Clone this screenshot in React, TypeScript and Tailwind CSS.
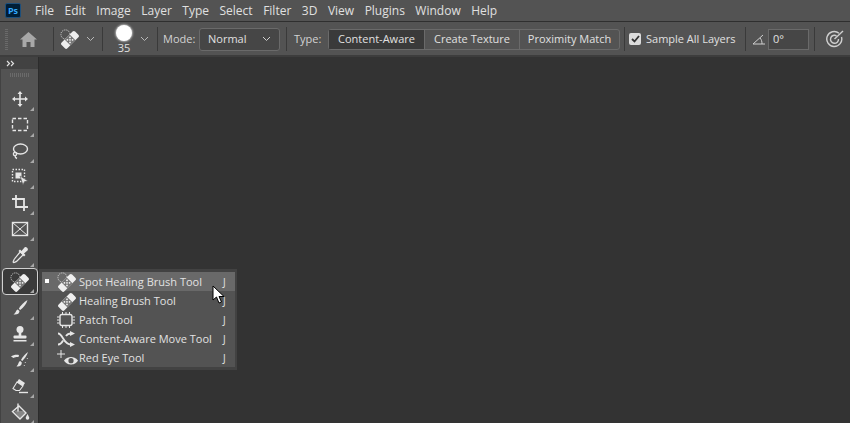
import type { ReactNode } from "react"

const font = "font-['Open_Sans',sans-serif]"

function Bandage({ spot = false, size = 22 }: { spot?: boolean; size?: number }) {
  return (
    <svg width={size} height={size} viewBox="0 0 22 22" fill="none">
      {spot && <circle cx="6" cy="6" r="5" stroke="#e8e8e8" strokeWidth="1" strokeDasharray="1.2 1.2" />}
      <g transform="rotate(-45 11 12)">
        <rect x="0.5" y="7.500" width="21" height="9" rx="2" fill="#efefef" />
        <rect x="7" y="7.500" width="8" height="9" fill="#757575" />
        <circle cx="9" cy="10" r="1" fill="#efefef" />
        <circle cx="13" cy="10" r="1" fill="#efefef" />
        <circle cx="9" cy="14" r="1" fill="#efefef" />
        <circle cx="13" cy="14" r="1" fill="#efefef" />
        <circle cx="11" cy="12" r="1" fill="#efefef" />
      </g>
    </svg>
  )
}

function Corner() {
  return <span className="absolute right-[3px] bottom-[1px] w-0 h-0 border-l-[4px] border-l-transparent border-b-[4px] border-b-[#a8a8a8]" />
}

function Tool({ children, active }: { children: ReactNode; active?: boolean }) {
  return (
    <div className={"relative flex items-center justify-center shrink-0 " + (active ? "border border-[#d0d0d0] rounded-[4px] bg-[#3a3a3a] h-[27px] w-[36px]" : "w-[34px] h-[26px]")}>
      {children}
      <Corner />
    </div>
  )
}

function Chevron({ color = "#b8b8b8" }: { color?: string }) {
  return (
    <svg width="9" height="6" viewBox="0 0 9 6" fill="none" stroke={color}>
      <path d="M1 1l3.500 3.500L8 1" />
    </svg>
  )
}

function Sep() {
  return <div className="w-px h-[24px] shrink-0 bg-[#3a3a3a]" />
}

const s = { fill: "none", stroke: "#e6e6e6", strokeWidth: 1.4 }

const tools = [
  <svg key="m" width="18" height="18" viewBox="0 0 18 18" fill="#e6e6e6"><path d="M9 1l2.500 3H9.800v4.200H14V6.500L17 9l-3 2.500V9.800H9.800V14h1.700L9 17l-2.500-3h1.700V9.800H4v1.700L1 9l3-2.500v1.700h4.200V4H6.500z" /></svg>,
  <svg key="r" width="18" height="16" viewBox="0 0 18 16"><rect x="1.5" y="1.5" width="15" height="12" {...s} strokeDasharray="3.5 2" /></svg>,
  <svg key="l" width="18" height="18" viewBox="0 0 18 18"><ellipse cx="9.5" cy="7" rx="7" ry="5" {...s} /><circle cx="4" cy="12" r="1.6" {...s} /><path d="M4 13.500c0 1.500 1 2.500 2 3" {...s} /></svg>,
  <svg key="o" width="18" height="18" viewBox="0 0 18 18"><rect x="1.5" y="1.5" width="12" height="12" {...s} strokeDasharray="1.5 1.5" /><rect x="4.5" y="4.5" width="6" height="6" fill="#e6e6e6" /><path d="M9 8l8 5-3.500.6L12 17z" fill="#e6e6e6" stroke="#535353" strokeWidth="0.6" /></svg>,
  <svg key="c" width="18" height="18" viewBox="0 0 18 18"><path d="M5 1v12h12M1 5h12v12" {...s} strokeWidth="1.8" /></svg>,
  <svg key="f" width="18" height="16" viewBox="0 0 18 16"><rect x="1.5" y="1.5" width="15" height="13" {...s} /><path d="M1.500 1.500l15 13M16.500 1.500l-15 13" {...s} strokeWidth="1" /></svg>,
  <svg key="e" width="18" height="18" viewBox="0 0 18 18"><path d="M9.500 5.500l3 3-6.500 6.500c-1 1-2 1-3 1.500-.5.300-1-.2-.8-.8.500-1 .5-2 1.500-3z" {...s} strokeWidth="1.2" /><path d="M9 3.500l1.500 1.500L13.500 1.500c1.500-1.500 4.500 1.500 3 3L13 7.500l1.500 1.500-1.500 1.500-5.500-5.500z" fill="#e6e6e6" /></svg>,
]

const tools2 = [
  <svg key="b" width="18" height="18" viewBox="0 0 18 18"><path d="M16.500 1C13 3 9.500 6.500 7.800 9.800l1.400 1.200C12.500 8.500 15.500 5 16.500 1z" fill="#e6e6e6" /><path d="M6.800 10.500c-2 .5-1.500 3-4.300 5 3.500.5 6-.8 6-3.500z" fill="#e6e6e6" /></svg>,
  <svg key="s" width="18" height="18" viewBox="0 0 18 18" fill="#e6e6e6"><circle cx="9" cy="4.500" r="3.500" /><rect x="7.700" y="7" width="2.600" height="4" /><rect x="2.500" y="10.500" width="13" height="3" rx="1" /><rect x="2.500" y="15" width="13" height="1.500" /></svg>,
  <svg key="h" width="20" height="18" viewBox="0 0 20 18"><path d="M18 1C15 3 12.500 6 11 9l1.300 1C14.500 7.500 17 4.500 18 1z" fill="#e6e6e6" /><path d="M10.200 10c-1.800.5-1.300 3-3.700 5.500 3 .5 5.500-1 5.300-4z" fill="#e6e6e6" /><path d="M9 4c-3-.5-6 0-8 1.500L3.500 7C5 6 7 5.800 8.500 6z" fill="#e6e6e6" /><path d="M15 11l.5.8M17 7l.5.8M14 14l.5.8" stroke="#e6e6e6" /></svg>,
  <svg key="er" width="20" height="18" viewBox="0 0 20 18"><path d="M9 2l6 4-2 3-6-4z" fill="#e6e6e6" /><path d="M7 5l6 4-3.500 4.500H6L3 11.500z" {...s} strokeWidth="1.1" /><path d="M9 15.500h9" {...s} /></svg>,
  <svg key="bk" width="20" height="20" viewBox="0 0 20 20"><path d="M9 4l7 7-6 6-7.500-7.500z" {...s} /><path d="M8 1.500v8" {...s} /><path d="M4 8.500l9 .5 3 2-6 6z" fill="#e6e6e6" fillOpacity="0.35" /><path d="M17.500 12c1 2 1.800 3 1.800 4a1.800 1.800 0 01-3.600 0c0-1 .8-2 1.800-4z" fill="#e6e6e6" /></svg>,
]

const menuItems = [
  { label: "Spot Healing Brush Tool", icon: <Bandage spot size={20} />, selected: true },
  { label: "Healing Brush Tool", icon: <Bandage size={20} /> },
  {
    label: "Patch Tool",
    icon: (
      <svg width="18" height="16" viewBox="0 0 18 16">
        <rect x="3" y="2.5" width="12" height="11" rx="2" {...s} />
        <path d="M5.500 0v2M9 0v2M12.500 0v2M5.500 14v2M9 14v2M12.500 14v2M0 5h2.500M0 8h2.500M0 11h2.500M15.500 5H18M15.500 8H18M15.500 11H18" stroke="#e6e6e6" />
      </svg>
    ),
  },
  {
    label: "Content-Aware Move Tool",
    icon: (
      <svg width="18" height="16" viewBox="0 0 18 16">
        <path d="M1 2.500c5 0 5 11 13 11M1 13.500c3 0 4-2 5-4M9 5c1-1.500 2.500-2.500 5-2.500" fill="none" stroke="#e6e6e6" strokeWidth="1.8" />
        <path d="M13 0l5 2.500L13 5zM13 11l5 2.500L13 16z" fill="#e6e6e6" />
      </svg>
    ),
  },
  {
    label: "Red Eye Tool",
    icon: (
      <svg width="22" height="18" viewBox="0 0 22 18">
        <path d="M4 1v8M0 5h8" stroke="#e6e6e6" />
        <path d="M7 11.500C9 8.500 12 8 14 8s5 .5 7 3.500C19 15 16 15.500 14 15.500S9 15 7 11.500z" fill="#e6e6e6" />
        <circle cx="14" cy="11.700" r="2.600" fill="#535353" />
      </svg>
    ),
  },
]

export default function App() {
  return (
    <div className={"relative w-[850px] h-[423px] overflow-hidden bg-[#333333] text-[#e0e0e0] flex flex-col " + font}>
      {/* menu bar */}
      <div className="h-[21px] shrink-0 bg-[#535353] flex items-center text-[12px] pl-[5px]">
        <div className="w-[16px] h-[15px] rounded-[2px] bg-[#001e36] border border-[#1c4f7c] text-[#31a8ff] text-[9px] font-bold flex items-center justify-center leading-none mr-[14px]">Ps</div>
        <div className="flex gap-[10.5px]">
          {["File", "Edit", "Image", "Layer", "Type", "Select", "Filter", "3D", "View", "Plugins", "Window", "Help"].map((m) => (
            <span key={m}>{m}</span>
          ))}
        </div>
      </div>
      <div className="h-px shrink-0 bg-[#2f2f2f]" />

      {/* options bar */}
      <div className="h-[35px] shrink-0 pt-px bg-[#535353] border-b-[2px] border-b-[#3d3d3d] flex items-center text-[11px] whitespace-nowrap">
        <div className="w-[3px] h-[22px] shrink-0 ml-[5px] bg-[repeating-linear-gradient(0deg,#6a6a6a_0_1px,transparent_1px_2px)]" />
        <div className="w-[45px] shrink-0 flex justify-center pr-[5px]">
          <svg width="17" height="15" viewBox="0 0 17 15" fill="#a8a8a8"><path d="M8.500 0L17 7.500h-2.500V15h-4v-5h-4v5h-4V7.500H0z" /></svg>
        </div>
        <Sep />
        <div className="w-[48px] shrink-0 flex items-center pl-[6px] gap-[6px]">
          <Bandage spot size={20} />
          <Chevron />
        </div>
        <Sep />
        <div className="w-[54px] shrink-0 flex items-center pl-[13px] gap-[8px]">
          <div className="flex flex-col items-center">
            <div className="w-[16px] h-[16px] rounded-full bg-white shadow-[0_0_2px_1px_#ffffff88]" />
            <span className="text-[11px] leading-[12px] mt-[1px]">35</span>
          </div>
          <Chevron />
        </div>
        <Sep />
        <span className="ml-[5px] w-[36px] shrink-0 text-[#d2d2d2]">Mode:</span>
        <div className="w-[81px] h-[23px] shrink-0 bg-[#464646] border border-[#6a6a6a] rounded-[3px] flex items-center justify-between px-[8px]">
          <span>Normal</span>
          <Chevron color="#cfcfcf" />
        </div>
        <div className="ml-[6px]"><Sep /></div>
        <span className="ml-[7px] w-[34px] shrink-0 text-[#d2d2d2]">Type:</span>
        <div className="h-[21px] w-[292px] shrink-0 flex border border-[#6a6a6a] rounded-[3px]">
          <div className="w-[95px] bg-[#3a3a3a] flex items-center justify-center">Content-Aware</div>
          <div className="w-[95px] border-l border-[#6a6a6a] flex items-center justify-center">Create Texture</div>
          <div className="flex-1 border-l border-[#6a6a6a] flex items-center justify-center">Proximity Match</div>
        </div>
        <div className="ml-[4px]"><Sep /></div>
        <div className="ml-[4px] w-[12px] h-[12px] shrink-0 bg-[#dcdcdc] rounded-[2px] flex items-center justify-center">
          <svg width="9" height="8" viewBox="0 0 9 8" fill="none" stroke="#333" strokeWidth="1.8"><path d="M1 4l2.500 2.500L8 1" /></svg>
        </div>
        <span className="ml-[5px] w-[99px] shrink-0">Sample All Layers</span>
        <Sep />
        <svg className="ml-[6px] shrink-0" width="14" height="12" viewBox="0 0 14 12" fill="none" stroke="#cfcfcf"><path d="M13 11H1L11 2M8 5c1.500 1.500 2 3.500 2 6" /></svg>
        <div className="ml-[2px] w-[41px] h-[21px] shrink-0 bg-[#464646] border border-[#6a6a6a] flex items-center pl-[4px]">0°</div>
        <div className="ml-[5px]"><Sep /></div>
        <svg className="ml-[11px] shrink-0" width="18" height="18" viewBox="0 0 18 18" fill="none" stroke="#cfcfcf" strokeWidth="1.4">
          <path d="M13 3.200A7.500 7.500 0 1015.500 7" />
          <path d="M10.500 5.800A4 4 0 1012.500 9" />
          <path d="M8.500 9L17 1" />
        </svg>
      </div>

      {/* workspace */}
      <div className="flex-1 flex min-h-0">
        <div className="w-[39px] shrink-0 bg-[#535353] border-l border-l-[#424242] border-r border-r-[#2c2c2c] flex flex-col items-center">
          <div className="w-full h-[12px] shrink-0 bg-[#424242] flex items-center pl-[5px]">
            <svg width="9" height="7" viewBox="0 0 9 7" fill="none" stroke="#e0e0e0" strokeWidth="1.2"><path d="M1 1l2.500 2.500L1 6M5 1l2.500 2.500L5 6" /></svg>
          </div>
          <div className="w-[20px] h-[4px] mt-[4px] mb-[9px] shrink-0 bg-[repeating-linear-gradient(90deg,#6a6a6a_0_1px,transparent_1px_2px)]" />
          {tools.map((t, i) => (
            <Tool key={i}>{t}</Tool>
          ))}
          <Tool active><Bandage spot size={20} /></Tool>
          {tools2.map((t, i) => (
            <Tool key={i}>{t}</Tool>
          ))}
        </div>
      </div>

      {/* flyout menu */}
      <div className="absolute left-[39px] top-[269px] w-[198px] h-[101px] bg-[#535353] border-[3px] border-r-[2px] border-[#424242] text-[11px] text-[#e2e2e2] flex flex-col">
        {menuItems.map((item) => (
          <div key={item.label} className={"relative h-[19px] shrink-0 flex items-center " + (item.selected ? "bg-[#696969]" : "")}>
            {item.selected && <span className="absolute left-[3px] top-[7px] w-[4px] h-[4px] bg-white" />}
            <span className="w-[37px] shrink-0 pl-[15px] flex items-center justify-start">{item.icon}</span>
            <span className="flex-1 whitespace-nowrap pt-[2px]">{item.label}</span>
            <span className="w-[12px] text-[10px] pt-[2px]">J</span>
          </div>
        ))}
      </div>

      {/* cursor */}
      <svg className="absolute left-[212px] top-[285px]" width="14" height="20" viewBox="0 0 14 20">
        <path d="M1 1v14l3.500-3 2.500 6 2.500-1-2.500-5.500H12z" fill="#fff" stroke="#000" />
      </svg>
    </div>
  )
}
